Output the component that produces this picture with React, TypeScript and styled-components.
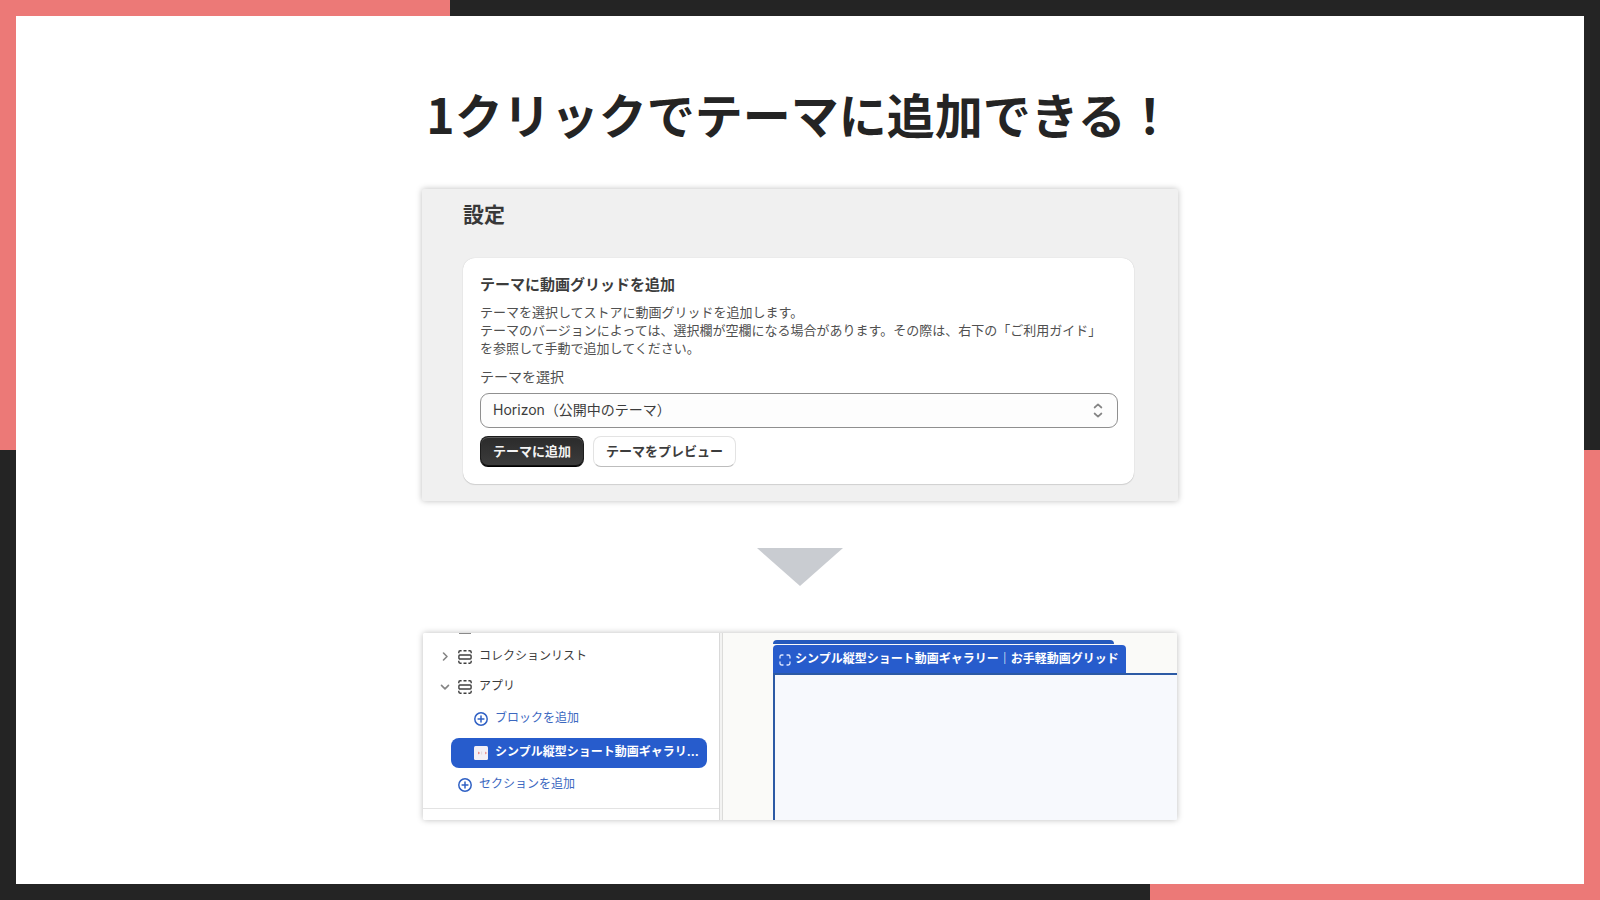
import React from "react";
import styled, { createGlobalStyle } from "styled-components";

const INK = "#242424";
const CORAL = "#ec7977";
const BLUE = "#275ccc";

const GlobalStyle = createGlobalStyle`
  * { box-sizing: border-box; }
  body {
    margin: 0;
    font-family: Inter, "Noto Sans CJK JP", sans-serif;
  }
  button, select { font-family: inherit; }
`;

const Frame = styled.div`
  display: flex;
  min-height: 100vh;
  padding: 16px;
  background:
    linear-gradient(${CORAL}, ${CORAL}) left top / 450px 450px no-repeat,
    linear-gradient(${CORAL}, ${CORAL}) right bottom / 450px 450px no-repeat,
    ${INK};
`;

const Sheet = styled.main`
  flex: 1;
  display: flex;
  flex-direction: column;
  align-items: center;
  padding: 61px 24px 48px;
  background: #fff;
`;

const Headline = styled.h1`
  margin: 0 0 40px;
  font: 700 48px/72px "Noto Sans CJK JP", sans-serif;
  color: ${INK};
`;

const Shot = styled.section`
  width: 100%;
  max-width: 756px;
  border-radius: 2px;
  box-shadow: 0 0 6px rgba(0, 0, 0, 0.26);
  overflow: hidden;
`;

const SettingsShot = styled(Shot)`
  padding: 10px 44px 17px 41px;
  background: #f0f0f0;
`;

const SettingsTitle = styled.h2`
  margin: 0 0 27px;
  font-size: 21px;
  line-height: 32px;
  font-weight: 700;
  color: #383838;
`;

const Card = styled.div`
  padding: 15px 16px 17px 17px;
  border-radius: 12px;
  background: #fff;
  box-shadow: 0 1px 1px rgba(0, 0, 0, 0.12), 0 0 1px rgba(0, 0, 0, 0.2);
`;

const CardTitle = styled.h3`
  margin: 0 0 6px;
  font-size: 15px;
  line-height: 24px;
  font-weight: 700;
  color: #3c3c3c;
`;

const CardText = styled.p`
  margin: 0 0 9px;
  font-size: 13px;
  line-height: 18px;
  color: #505050;
`;

const FieldLabel = styled.label`
  display: block;
  margin-bottom: 5px;
  font-size: 14px;
  line-height: 22px;
  color: #505050;
`;

const SelectWrap = styled.div`
  display: grid;
  align-items: center;
  margin-bottom: 8px;
  & > * { grid-area: 1 / 1; }
  & > svg { justify-self: end; margin-right: 15px; pointer-events: none; }
`;

const Select = styled.select`
  appearance: none;
  width: 100%;
  height: 35px;
  padding: 0 36px 2px 12px;
  border: 1px solid #8f8f8f;
  border-radius: 9px;
  background: #fdfdfd;
  font-size: 14px;
  color: #3c3c3c;
`;

const Actions = styled.div`
  display: flex;
  gap: 9px;
`;

const ActionButton = styled.button<{ $primary?: boolean }>`
  height: 31px;
  padding: 0 12px 2px;
  border: 1px solid ${(p) => (p.$primary ? "#1c1c1c" : "#e3e3e3")};
  border-bottom-color: ${(p) => (p.$primary ? "#000" : "#bdbdbd")};
  border-radius: 8px;
  background: ${(p) => (p.$primary ? "linear-gradient(#2b2b2b, #3c3c3c)" : "#fff")};
  box-shadow: ${(p) => (p.$primary ? "inset 0 1px 0 #5a5a5a, inset 0 -1px 0 #111" : "none")};
  font-size: 13px;
  line-height: 20px;
  font-weight: 700;
  color: ${(p) => (p.$primary ? "#f4f4f4" : "#3c3c3c")};
`;

const Arrow = styled.svg`
  display: block;
  margin: 47px 0;
`;

const EditorShot = styled(Shot)`
  display: flex;
  max-width: 754px;
  min-height: 187px;
`;

const Sidebar = styled.nav`
  flex: 0 0 297px;
  display: flex;
  flex-direction: column;
  background: #fff;
  border-right: 1px solid #d9d9d9;
`;

const ClippedRow = styled.div`
  height: 9px;
  padding-left: 35px;
  overflow: hidden;
  & > svg { display: block; }
`;

const TreeRow = styled.button<{ $link?: boolean; $inset?: number }>`
  display: flex;
  align-items: center;
  gap: 7px;
  width: 100%;
  height: 30px;
  padding: 0 12px 0 ${(p) => p.$inset ?? 16}px;
  border: 0;
  background: none;
  font-size: 12px;
  line-height: 18px;
  text-align: left;
  color: ${(p) => (p.$link ? "#3c68bf" : "#3c3c3c")};
  & > svg { flex: none; }
`;

const RowLabel = styled.span`
  padding-bottom: 2px;
  overflow: hidden;
  text-overflow: ellipsis;
  white-space: nowrap;
`;

const Blocks = styled.div`
  display: flex;
  flex-direction: column;
  gap: 4px;
  padding: 2px 12px 2px 28px;
`;

const SelectedRow = styled(TreeRow)`
  padding-right: 6px;
  border-radius: 8px;
  background: ${BLUE};
  font-weight: 700;
  color: #fff;
`;

const SidebarFooter = styled.div`
  flex: 1;
  margin-top: 8px;
  border-top: 1px solid #e3e3e3;
`;

const CanvasArea = styled.div`
  flex: 1;
  min-width: 0;
  display: flex;
  background: #f3f3f2;
`;

const Canvas = styled.div`
  flex: 1;
  min-width: 0;
  display: flex;
  flex-direction: column;
  align-items: flex-start;
  margin-left: 2px;
  padding: 7px 0 0 50px;
  border-left: 1px solid #dcdcda;
  background: #fafaf8;
`;

const BackTab = styled.div`
  width: 341px;
  max-width: 100%;
  height: 4px;
  margin-bottom: 1px;
  border-radius: 4px 4px 0 0;
  background: #2459bd;
`;

const FrontTab = styled.div`
  display: flex;
  align-items: center;
  gap: 4px;
  height: 28px;
  padding: 2px 7px 0 6px;
  border-radius: 4px 4px 0 0;
  background: ${BLUE};
  font-size: 12px;
  line-height: 18px;
  font-weight: 700;
  white-space: nowrap;
  color: #fff;
`;

const BlockPreview = styled.div`
  flex: 1;
  align-self: stretch;
  border: solid #2c5aa5;
  border-width: 2px 0 0 2px;
  background: #f7f9fd;
`;

const SectionIcon = () => (
  <svg width="14" height="14" viewBox="0 0 14 14" fill="none" stroke="#3f3f3f" strokeWidth="1.4" aria-hidden="true">
    <rect x="0.9" y="5" width="12.2" height="4" rx="1" />
    <path d="M.8 3.3V2.2C.8 1.3 1.3.8 2.2.8H3.6M5.500.8h3M10.400.8h1.400c.9 0 1.400.5 1.400 1.400v1.100M.8 10.700v1.100c0 .9.5 1.400 1.400 1.400h1.400M5.500 13.200h3M10.400 13.200h1.400c.9 0 1.400-.5 1.400-1.400v-1.100" />
  </svg>
);

const Chevron = ({ open }: { open?: boolean }) => (
  <svg width="12" height="12" viewBox="0 0 12 12" fill="none" stroke="#858585" strokeWidth="1.6" strokeLinecap="round" strokeLinejoin="round" aria-hidden="true">
    <path d={open ? "M2.500 4.400 6 7.900l3.500-3.500" : "M4.500 2 8 5.500 4.500 9"} />
  </svg>
);

const PlusIcon = () => (
  <svg width="14" height="14" viewBox="0 0 14 14" fill="none" stroke="#2f60c4" strokeWidth="1.500" strokeLinecap="round" aria-hidden="true">
    <circle cx="7" cy="7" r="6.200" />
    <path d="M7 4.100v5.800M4.100 7h5.800" />
  </svg>
);

const AppIcon = () => (
  <svg width="14" height="14" viewBox="0 0 14 14" aria-hidden="true">
    <rect width="14" height="14" rx="1.500" fill="#f3eff5" />
    <path d="M4 5.500v3L6.200 7z" fill="#e98a85" />
    <path d="M11 5.500v3L13.200 7z" fill="#ec9a97" />
    <path d="M7.600 5.500v3" stroke="#e0d4dc" strokeWidth="1" />
  </svg>
);

const FocusIcon = () => (
  <svg width="12" height="12" viewBox="0 0 12 12" fill="none" stroke="#dfe8ff" strokeWidth="1.300" strokeLinecap="round" aria-hidden="true">
    <path d="M1 4V2.800C1 1.600 1.600 1 2.800 1H4M8 1h1.200C10.400 1 11 1.600 11 2.800V4M11 8v1.200c0 1.200-.6 1.800-1.800 1.800H8M4 11H2.800C1.600 11 1 10.400 1 9.200V8" />
  </svg>
);

export default function App() {
  return (
    <>
      <GlobalStyle />
      <Frame lang="ja">
        <Sheet>
          <Headline>1クリックでテーマに追加できる！</Headline>

          <SettingsShot>
            <SettingsTitle>設定</SettingsTitle>
            <Card>
              <CardTitle>テーマに動画グリッドを追加</CardTitle>
              <CardText>
                テーマを選択してストアに動画グリッドを追加します。
                <br />
                テーマのバージョンによっては、選択欄が空欄になる場合があります。その際は、右下の「ご利用ガイド」
                <br />
                を参照して手動で追加してください。
              </CardText>
              <FieldLabel htmlFor="theme">テーマを選択</FieldLabel>
              <SelectWrap>
                <Select id="theme" defaultValue="horizon">
                  <option value="horizon">Horizon（公開中のテーマ）</option>
                </Select>
                <svg width="10" height="16" viewBox="0 0 10 16" fill="none" stroke="#858585" strokeWidth="1.700" strokeLinecap="round" strokeLinejoin="round" aria-hidden="true">
                  <path d="M1.600 4.500 5 1.400 8.400 4.500M1.600 10.500 5 13.600 8.400 10.500" />
                </svg>
              </SelectWrap>
              <Actions>
                <ActionButton type="button" $primary>テーマに追加</ActionButton>
                <ActionButton type="button">テーマをプレビュー</ActionButton>
              </Actions>
            </Card>
          </SettingsShot>

          <Arrow width="86" height="38" viewBox="0 0 86 38" aria-hidden="true">
            <path d="M0 0h86L43 38z" fill="#c9ccd1" />
          </Arrow>

          <EditorShot>
            <Sidebar>
              <ClippedRow>
                <svg width="14" height="1" viewBox="0 0 14 1" aria-hidden="true">
                  <path d="M1 .5h12" stroke="#8a8a8a" />
                </svg>
              </ClippedRow>
              <TreeRow type="button" aria-expanded="false">
                <Chevron />
                <SectionIcon />
                <RowLabel>コレクションリスト</RowLabel>
              </TreeRow>
              <TreeRow type="button" aria-expanded="true">
                <Chevron open />
                <SectionIcon />
                <RowLabel>アプリ</RowLabel>
              </TreeRow>
              <Blocks>
                <TreeRow type="button" $link $inset={23}>
                  <PlusIcon />
                  <RowLabel>ブロックを追加</RowLabel>
                </TreeRow>
                <SelectedRow type="button" $inset={23}>
                  <AppIcon />
                  <RowLabel>シンプル縦型ショート動画ギャラリ…</RowLabel>
                </SelectedRow>
              </Blocks>
              <TreeRow type="button" $link $inset={35}>
                <PlusIcon />
                <RowLabel>セクションを追加</RowLabel>
              </TreeRow>
              <SidebarFooter />
            </Sidebar>
            <CanvasArea>
              <Canvas>
                <BackTab />
                <FrontTab>
                  <FocusIcon />
                  <RowLabel>シンプル縦型ショート動画ギャラリー｜お手軽動画グリッド</RowLabel>
                </FrontTab>
                <BlockPreview />
              </Canvas>
            </CanvasArea>
          </EditorShot>
        </Sheet>
      </Frame>
    </>
  );
}
